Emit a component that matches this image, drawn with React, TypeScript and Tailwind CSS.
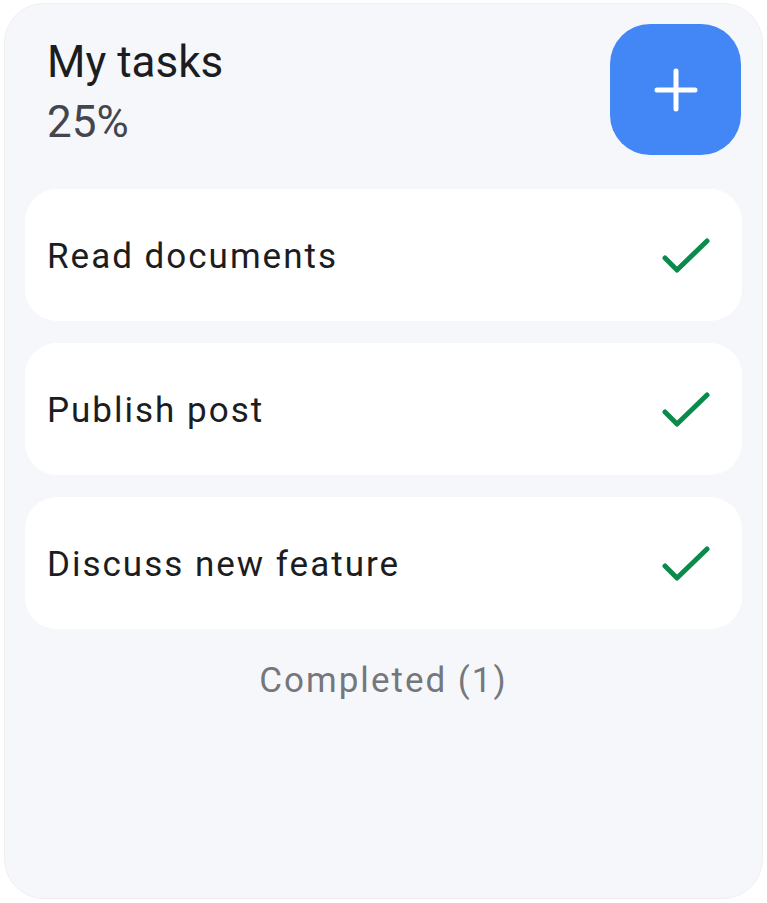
const tasks = [
  { id: "read", title: "Read documents" },
  { id: "publish", title: "Publish post" },
  { id: "discuss", title: "Discuss new feature" },
];

function CheckIcon() {
  return (
    <svg width="48" height="40" viewBox="0 0 48 40" fill="none" aria-hidden="true">
      <polyline
        points="3,23 15,35 45,6"
        stroke="#0b8a4b"
        strokeWidth="5"
        strokeLinecap="round"
        strokeLinejoin="round"
      />
    </svg>
  );
}

function PlusIcon() {
  return (
    <svg width="44" height="44" viewBox="0 0 44 44" fill="none" aria-hidden="true">
      <path d="M22 3v38M3 22h38" stroke="#ffffff" strokeWidth="5" strokeLinecap="round" />
    </svg>
  );
}

export default function App() {
  return (
    <div className="min-h-[903px] bg-white pt-[3px] px-[4px] pb-[4px] font-['Roboto',sans-serif]">
      <div className="flex h-[896px] flex-col rounded-[40px] border border-[#f1eef2] bg-[#f6f7fb] px-[20px] pt-[20px]">
        <div className="flex items-start justify-between">
          <div className="pl-[22px] pt-[8px]">
            <div className="text-[44px] leading-[60px] text-[#1b1d21]">My tasks</div>
            <div className="text-[44px] leading-[60px] text-[#44464f]">25%</div>
          </div>
          <button
            type="button"
            className="mr-[1px] flex h-[131px] w-[131px] items-center justify-center rounded-[40px] bg-[#4287f5]"
          >
            <PlusIcon />
          </button>
        </div>

        <div className="mt-[34px] flex flex-col gap-[22px]">
          {tasks.map((task) => (
            <div
              key={task.id}
              className="flex h-[132px] items-center justify-between rounded-[32px] bg-white pl-[22px] pr-[32px]"
            >
              <div className="pt-[4px] text-[35px] tracking-[2px] text-[#1b1d21]">{task.title}</div>
              <CheckIcon />
            </div>
          ))}
        </div>

        <div className="mt-[27px] text-center text-[35px] leading-[50px] tracking-[2px] text-[#75777d]">
          Completed (1)
        </div>
      </div>
    </div>
  );
}
